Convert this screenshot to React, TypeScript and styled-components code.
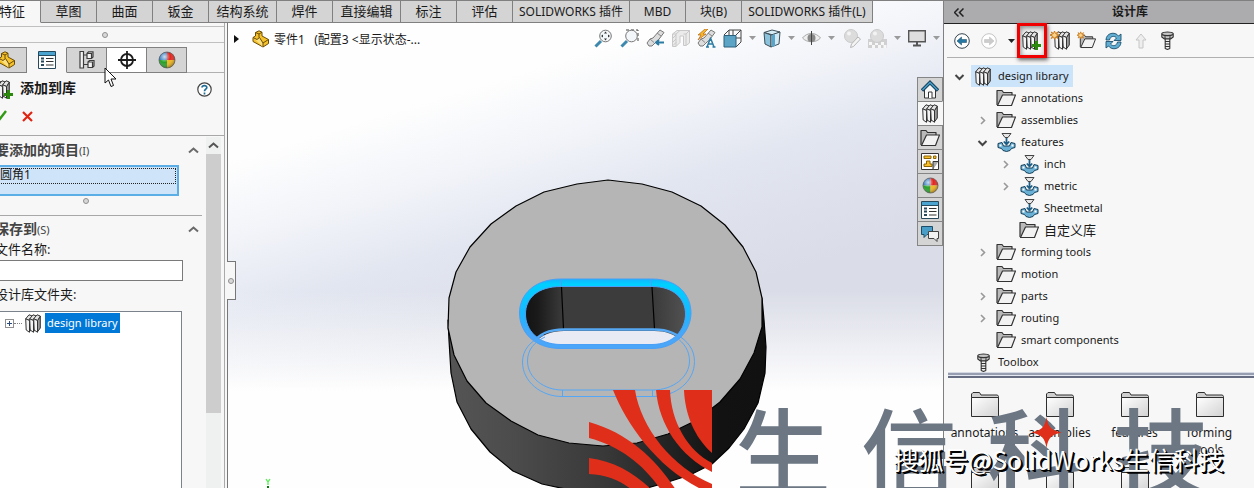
import React from 'react';
import styled, { createGlobalStyle, css } from 'styled-components';

const uiFont = '"Noto Sans", "Noto Sans CJK SC", sans-serif';

const GlobalStyle = createGlobalStyle`
  * { box-sizing: border-box; }
  body { margin: 0; font-family: ${uiFont}; font-size: 12px; color: #1a1a1a; }
  button, input { font: inherit; color: inherit; }
  button { padding: 0; border: 0; background: none; }
  ul { list-style: none; margin: 0; padding: 0; }
  h1, h2, h3, p { margin: 0; font-size: inherit; }
  svg { display: block; flex: none; }
`;

/* ---------- shell ---------- */

const Shell = styled.div`
  position: relative;
  display: flex;
  height: 100vh;
  overflow: hidden;
  background: #f7f7f7;
`;

const Main = styled.div`
  flex: 1;
  min-width: 0;
  display: flex;
  flex-direction: column;
  border-top: 1px solid #808080;
  background:
    linear-gradient(180deg, rgba(255, 255, 255, 0) 290px, #fefefe 390px),
    linear-gradient(163deg, #fefefe 220px, #f2f4f9 295px, #e2e6f0 370px, #dadce7 490px);
`;

const TabBar = styled.nav`
  display: flex;
  height: 22px;
  margin-left: -16px;
`;

const CommandTab = styled.button<{ $w: number; $active?: boolean }>`
  flex: none;
  width: ${(p) => p.$w}px;
  height: 22px;
  padding-bottom: 1px;
  font-size: 13px;
  line-height: 18px;
  white-space: nowrap;
  background: ${(p) => (p.$active ? '#f7f7f7' : '#d4d4d4')};
  border-right: 1px solid #808080;
  border-bottom: 1px solid ${(p) => (p.$active ? '#f7f7f7' : '#808080')};
`;

const LatinTabText = styled.span`
  font-size: 12px;
`;

const Work = styled.div`
  flex: 1;
  min-height: 0;
  display: flex;
`;

/* ---------- property manager ---------- */

const LeftPanel = styled.aside`
  position: relative;
  flex: none;
  width: 228px;
  padding-right: 2px;
  border-right: 1px solid #777;
  background: #f7f7f7;
`;

const LeftInner = styled.div`
  height: 100%;
  display: flex;
  flex-direction: column;
  border-right: 1px solid #aaa;
  overflow: hidden;
`;

const Grip = styled.span`
  width: 6px;
  height: 6px;
  border: 1px solid #909090;
  border-radius: 50%;
  background: #d8d8d8;
`;

const TopGrip = styled.div`
  display: flex;
  align-items: center;
  justify-content: center;
  height: 17px;
  margin-top: 3px;
  padding-right: 14px;
  border-top: 1px solid #c0c0c0;
  border-bottom: 1px solid #c0c0c0;
`;

const IconTabs = styled.div`
  display: flex;
  height: 26px;
  margin: 4px 0 0 -13px;
`;

const IconTab = styled.button<{ $kind?: 'active' | 'light' }>`
  display: flex;
  align-items: center;
  justify-content: center;
  width: 40px;
  border: 1px solid #808080;
  border-left: 0;
  background: #d4d4d4;
  ${(p) => p.$kind === 'light' && css`background: #fff;`}
  ${(p) => p.$kind === 'active' && css`background: #f7f7f7; border-top-color: #f7f7f7; border-bottom-color: #f7f7f7;`}
`;

const TabFill = styled.span`
  flex: 1;
  border-bottom: 1px solid #b0b0b0;
`;

const PanelHeader = styled.header`
  flex: none;
  height: 63px;
  padding: 6px 12px 0 0;
  border-bottom: 1px solid #a8a8a8;
`;

const TitleRow = styled.div`
  display: flex;
  align-items: center;
  gap: 6px;
  height: 20px;
  margin-left: -6px;
  font-size: 14px;
  line-height: 18px;
  font-weight: 700;
  h1 { flex: 1; padding-bottom: 2px; }
`;

const ConfirmRow = styled.div`
  display: flex;
  align-items: center;
  gap: 14px;
  height: 34px;
  margin-left: -7px;
`;

const PanelBody = styled.div`
  flex: 1;
  min-height: 0;
  display: flex;
`;

const Groups = styled.div`
  flex: 1;
  display: flex;
  flex-direction: column;
  margin-left: -5px;
  margin-right: 4px;
`;

const Group = styled.section<{ $fill?: boolean }>`
  display: flex;
  flex-direction: column;
  ${(p) => p.$fill ? css`flex: 1;` : css`padding-bottom: 9px; border-bottom: 1px solid #a8a8a8;`}
`;

const GroupHead = styled.div<{ $h: number }>`
  display: flex;
  align-items: center;
  justify-content: space-between;
  height: ${(p) => p.$h}px;
  padding-right: 3px;
  color: #444;
  h2 { font-size: 14px; line-height: 20px; white-space: nowrap; }
  small { font-size: 11px; font-weight: 400; }
`;

const Selection = styled.ul`
  height: 31px;
  margin-right: 23px;
  padding: 1px;
  border: 2px solid #5baee6;
  background: #cfe4f8;
  li { height: 16px; padding-left: 1px; border: 1px dotted #222; font-size: 12px; line-height: 12px; }
`;

const ListGrip = styled.div`
  display: flex;
  align-items: center;
  justify-content: center;
  height: 10px;
  margin-right: 26px;
`;

const FieldLabel = styled.label`
  display: block;
  height: 18px;
  font-size: 13px;
  line-height: 14px;
`;

const TextField = styled.input`
  height: 21px;
  width: auto;
  margin: 0 19px 6px 0;
  border: 1px solid #7a7a7a;
  background: #fff;
`;

const FolderBox = styled.ul`
  flex: 1;
  margin: 6px 20px 0 0;
  padding: 1px 0 0 9px;
  border: 1px solid #7c828c;
  border-bottom: 0;
  background: #fff;
  li { display: flex; align-items: center; }
`;

const Expander = styled.button`
  width: 9px;
  height: 9px;
  border: 1px solid #909090;
  background: linear-gradient(#2c4c80, #2c4c80) center / 5px 1px no-repeat, linear-gradient(#2c4c80, #2c4c80) center / 1px 5px no-repeat, #fff;
`;

const Dots = styled.span`
  width: 8px;
  margin-right: 3px;
  border-top: 1px dotted #808080;
`;

const Picked = styled.span`
  margin-left: 4px;
  padding: 0 2px;
  line-height: 20px;
  font-size: 11px;
  color: #fff;
  background: #0078d7;
`;

const ScrollTrack = styled.div`
  width: 15px;
  margin: 1px 3px 0 0;
  background: #eff0f0;
`;

const ScrollUp = styled.button`
  display: flex;
  align-items: center;
  justify-content: center;
  width: 15px;
  height: 17px;
`;

const ScrollThumb = styled.div`
  height: 259px;
  background: #cdcdcd;
`;

const Handle = styled.button`
  position: absolute;
  top: 238px;
  right: -9px;
  z-index: 2;
  display: flex;
  align-items: center;
  justify-content: center;
  width: 9px;
  height: 39px;
  border: 1px solid #777;
  border-left: 0;
  background: #f7f7f7;
`;

const Cursor = styled.svg`
  position: absolute;
  left: 104px;
  top: 44px;
  z-index: 3;
`;

/* ---------- graphics area ---------- */

const Viewport = styled.main`
  position: relative;
  flex: 1;
  min-width: 0;
  display: flex;
  align-items: flex-start;
  justify-content: space-between;
`;

const Scene = styled.svg`
  position: absolute;
  inset: 0;
`;

const FeatureCrumb = styled.div`
  position: relative;
  display: flex;
  align-items: center;
  height: 31px;
  padding-left: 6px;
  font-size: 12px;
  white-space: pre;
  svg + svg { margin: 0 4px 0 13px; }
`;

const HeadsUp = styled.div`
  position: relative;
  display: flex;
  align-items: center;
  gap: 7px;
  height: 30px;
  padding-right: 3px;
`;

const TaskRail = styled.div`
  position: absolute;
  top: 54px;
  right: 0;
  width: 26px;
`;

const RailTab = styled.button<{ $active?: boolean }>`
  display: flex;
  align-items: center;
  justify-content: center;
  width: 26px;
  height: 24px;
  border: 1px solid #858585;
  border-bottom: 0;
  background: #d4d4d4;
  &:last-child { height: 25px; border-bottom: 1px solid #858585; }
  ${(p) => p.$active && css`background: #f7f7f7; border-right-color: #f7f7f7;`}
`;

/* ---------- design library ---------- */

const RightPanel = styled.aside`
  flex: none;
  width: 311px;
  display: flex;
  flex-direction: column;
  border-top: 1px solid #808080;
  border-left: 1px solid #808080;
  background: #f7f7f7;
`;

const LibraryHead = styled.header`
  flex: none;
  display: flex;
  align-items: center;
  height: 23px;
  padding: 0 0 0 10px;
  border-bottom: 1px solid #222;
  background: #acacae;
  h2 { flex: 1; padding-left: 42px; text-align: center; font-size: 12px; line-height: 20px; }
`;

const Tools = styled.div`
  flex: none;
  display: flex;
  align-items: center;
  height: 34px;
  margin-left: 3px;
  padding-left: 4px;
  border-bottom: 1px solid #b0b0b0;
`;

const Tool = styled.button<{ $w?: number; $marked?: boolean }>`
  position: relative;
  display: flex;
  align-items: center;
  justify-content: center;
  flex: none;
  width: ${(p) => p.$w ?? 27}px;
  height: 32px;
  ${(p) => p.$marked && css`
    z-index: 1;
    height: 35px;
    border: 3px solid #f00000;
    box-shadow: 1px 2px 4px rgba(0, 0, 0, 0.6), inset 1px 2px 5px rgba(0, 0, 0, 0.45);
  `}
`;

const Tree = styled.ul`
  flex: none;
  padding: 7px 0 0 6px;
`;

const TreeRow = styled.li<{ $level: number }>`
  display: flex;
  align-items: center;
  height: 22px;
  padding-left: ${(p) => [0, 23, 46][p.$level]}px;
`;

const Twisty = styled.span`
  display: flex;
  align-items: center;
  justify-content: center;
  width: 18px;
  margin-right: 3px;
`;

const TreeItem = styled.button<{ $selected?: boolean; $cjk?: boolean }>`
  display: flex;
  align-items: center;
  gap: 5px;
  height: 22px;
  padding: 0 4px 0 2px;
  white-space: nowrap;
  font-size: ${(p) => (p.$cjk ? 13 : 11)}px;
  line-height: 20px;
  background: ${(p) => (p.$selected ? '#cce4f9' : 'transparent')};
`;

const IconCell = styled.span`
  display: flex;
  align-items: center;
  justify-content: center;
  width: 20px;
`;

const Splitter = styled.div`
  flex: none;
  height: 6px;
  margin: -1px 0 0 4px;
  border-top: 1px solid #d3d8e4;
  border-bottom: 2px solid #666d82;
  background: linear-gradient(#989eb2 2px, #e4e8f2 2px);
`;

const FolderGrid = styled.ul`
  flex: 1;
  min-height: 0;
  display: grid;
  grid-template-columns: repeat(4, 75px);
  grid-auto-rows: 75px;
  padding: 14px 0 0 3px;
`;

const FolderTile = styled.li`
  display: flex;
  flex-direction: column;
  align-items: center;
  gap: 7px;
  font-size: 12px;
  line-height: 17px;
  text-align: center;
`;

/* ---------- watermark ---------- */

const Brand = styled.div`
  position: absolute;
  right: 0;
  bottom: 0;
  z-index: 4;
  width: 665px;
  height: 98px;
  overflow: hidden;
  pointer-events: none;
`;

const BrandRow = styled.div`
  display: flex;
  align-items: flex-start;
`;

const BrandName = styled.div`
  display: flex;
  gap: 30px;
  margin: 10px 0 0 22px;
  font-family: "Noto Sans CJK SC", sans-serif;
  font-size: 96px;
  font-weight: 500;
  line-height: 96px;
  color: #6c7783;
`;

const BrandStar = styled.svg`
  position: absolute;
  left: 442px;
  top: 27px;
`;

const Credit = styled.p`
  position: absolute;
  right: 30px;
  bottom: 12px;
  font-family: "Noto Sans CJK SC", sans-serif;
  font-size: 25px;
  line-height: 34px;
  color: #fff;
  white-space: nowrap;
  text-shadow: 1px 1px 0 #000, 2px 2px 0 #000;
`;

/* ---------- icons ---------- */

const Spark = () => (
  <path d="M4 0l1 2.500L7.500 1 6 3.300 8.500 4 6 5l1.500 2.500L5 6 4 8.500 3.200 6 .8 7.500 2 5-.5 4 2 3.200.8 1 3 2.500z" fill="#fbd38a" stroke="#c87410" strokeWidth=".9" />
);

const Books = ({ plus, spark }: { plus?: boolean; spark?: boolean }) => {
  const wide = plus || spark;
  return (
    <svg width={wide ? 20 : 16} height="19" viewBox={plus ? '0 0 20 19' : spark ? '-4 0 20 19' : '0 0 16 19'} stroke="#333" strokeLinejoin="round">
      {[0, 4, 8].map((x) => (
        <g key={x} transform={`translate(${x} 0)`}>
          <path d="M4.500 6.500 7.300 2v12L4.500 17.800z" fill="#9a9a9a" />
          <path d="M.7 4.800 4 .8 7.300 2 4.500 6.500z" fill="#e4e4e4" />
          <path d="M.7 4.800 4.500 6.500v11.800L1.200 16z" fill="#f4f4f4" />
        </g>
      ))}
      {plus && <path d="M14.500 10v9M10 14.500h9" stroke="#2b8a0c" strokeWidth="3" />}
      {spark && <g transform="translate(-3.500 0)"><Spark /></g>}
    </svg>
  );
};

const OpenFolder = ({ spark }: { spark?: boolean }) => (
  <svg width={spark ? 19 : 20} height={spark ? 19 : 18} viewBox={spark ? '-3 -3 23 22' : '0 0 20 18'} stroke="#333" strokeWidth="1.200" strokeLinejoin="round">
    <path d="M1 16V1.500h5l1.500 2h8.500V6" fill="#b9b9b9" />
    <path d="M1.500 16.500 6.500 6h13l-4 10.500z" fill="#f2f2f2" />
    {spark && <g transform="translate(-2.500 -2.500)"><Spark /></g>}
  </svg>
);

const ClosedFolder = () => (
  <svg width="28" height="25" viewBox="0 0 28 25" stroke="#2e2e2e" strokeLinejoin="round">
    <defs>
      <linearGradient id="tile" x1="0" y1="0" x2="1" y2="1">
        <stop offset="0" stopColor="#fff" /><stop offset="1" stopColor="#d2d2d2" />
      </linearGradient>
    </defs>
    <path d="M.5 24V2L2 .5h6.500L10 3h16.500l1 1.500V6" fill="#cfcfcf" />
    <path d="M.5 24.500v-19h27v19z" fill="url(#tile)" />
  </svg>
);

const FeatureIcon = () => (
  <svg width="19" height="20" viewBox="0 0 19 20" strokeLinejoin="round">
    <path d="M5 1.500h9L11 5.500H8z" fill="#e6e6e6" stroke="#444" />
    <path d="M1 11.500l4-1 1.500 3.500h6l1.500-3.500 4 1v4l-3.500 1-1.500 2-3.500 1-3.500-1-1.500-2-3.500-1z" fill="#6aafd4" stroke="#143f59" />
    <path d="M2.500 13.500h2M14.500 13.500h2" stroke="#fff" strokeWidth="2" />
    <path d="M9.500 6v6M6.800 9.500l2.700 3 2.700-3" fill="none" stroke="#1f5f86" strokeWidth="1.800" />
  </svg>
);

const Bolt = () => (
  <svg width="13" height="19" viewBox="0 0 13 19" stroke="#333" strokeWidth="1.100" strokeLinejoin="round">
    <path d="M.8 2.500C2 .5 11 .5 12.200 2.500V6L9.500 8h-6L.8 6z" fill="#c6c6c6" />
    <path d="M1 3.500C3 5 10 5 12 3.500M4 5v3M9 5v3" fill="none" />
    <path d="M4.200 8h4.600v9.500l-2.300 1-2.300-1z" fill="#eee" />
    <path d="M4 10.500h5M4 13h5M4 15.500h5" />
  </svg>
);

const Ball = ({ s = 18 }: { s?: number }) => (
  <svg width={s} height={s} viewBox="0 0 18 18">
    <defs>
      <radialGradient id="gloss" cx=".35" cy=".3" r=".8">
        <stop offset="0" stopColor="#fff" stopOpacity=".75" /><stop offset=".45" stopColor="#fff" stopOpacity="0" /><stop offset="1" stopColor="#000" stopOpacity=".5" />
      </radialGradient>
    </defs>
    <path d="M9 9V1a8 8 0 0 0-8 8z" fill="#3077bd" />
    <path d="M9 9V1a8 8 0 0 1 8 8z" fill="#e2251d" />
    <path d="M9 9H1a8 8 0 0 0 8 8z" fill="#28a02b" />
    <path d="M9 9h8a8 8 0 0 1-8 8z" fill="#f3b71b" />
    <circle cx="9" cy="9" r="8" fill="url(#gloss)" stroke="#555" strokeWidth=".7" />
  </svg>
);

const PartIcon = () => (
  <svg width="18" height="18" viewBox="0 0 18 18" stroke="#6b4c06" strokeLinejoin="round">
    <path d="M1 7.500 3.500 6V2.500L7 .8l3 1.400V6l6.500 3.500v4L11 17 1 11.500z" fill="#f6c22b" />
    <path d="M1 7.500 5 9.500l2.500-2L11 13v4" fill="#fbe080" />
    <path d="M11 13l5.500-3.500M3.500 2.500 7 4l3-1.800M7 4v3.500" fill="none" />
  </svg>
);

const ListIcon = () => (
  <svg width="18" height="18" viewBox="0 0 18 18">
    <path d="M.5.500h17v17H.5z" fill="#fff" stroke="#26495c" />
    <path d="M1 1h16v3H1z" fill="#4ba3d0" />
    <path d="M.5 4.500h17" stroke="#26495c" />
    <path d="M3 7.500h3M3 10.500h3M3 14h3" stroke="#26495c" strokeWidth="2" />
    <path d="M8 7.500h7.500M8 10.500h7.500M8 14h7.500" stroke="#333" />
  </svg>
);

const ConfigIcon = () => (
  <svg width="16" height="18" viewBox="0 0 16 18" fill="#f3f3f3" stroke="#3c3c3c" strokeWidth="1.200">
    <path d="M1 .5h3.500V17H1zM4.500 4H8M4.500 13.500H9" />
    <path d="M8 2.500 9.500.8H14V6l-1.500 1.500H8zM8 2.500h4.500v5M9 11l1.500-1.500H15V15l-1.500 1.500H9zM9 11h4.500v5.500" />
  </svg>
);

const TargetIcon = () => (
  <svg width="18" height="18" viewBox="0 0 18 18" fill="none" stroke="#1c1c1c" strokeWidth="1.800">
    <circle cx="9" cy="9" r="6" /><path d="M9 0v18M0 9h18" />
  </svg>
);

const Chevron = ({ dir, color = '#6a6a6a' }: { dir: 'up' | 'down' | 'right'; color?: string }) => (
  <svg width="11" height="11" viewBox="0 0 11 11" fill="none" stroke={color} strokeWidth={dir === 'right' ? 1.6 : 2}>
    <path d={{ up: 'M1 7.500 5.500 3.500 10 7.500', down: 'M1.500 4l4 4 4-4', right: 'M4 2 7.500 5.500 4 9' }[dir]} />
  </svg>
);

const Caret = ({ color = '#9a9a9a' }: { color?: string }) => (
  <svg width="7" height="4" viewBox="0 0 7 4"><path d="M0 0h7L3.500 4z" fill={color} /></svg>
);

const ArrowCircle = ({ dim }: { dim?: boolean }) => (
  <svg width="16" height="16" viewBox="0 0 16 16">
    <circle cx="8" cy="8" r="7.300" fill="#fff" stroke={dim ? '#c4c4c4' : '#34434e'} />
    <path d={dim ? 'M13 8 8.500 4v2.500H3.500v3h5V12z' : 'M3 8l4.500-4v2.500h5v3h-5V12z'} fill={dim ? '#ccc' : '#2578a3'} stroke={dim ? '#bbb' : '#123f5c'} strokeWidth=".5" />
  </svg>
);

const RefreshIcon = () => (
  <svg width="17" height="18" viewBox="0 0 17 18" fill="#62aed3" stroke="#1c506d" strokeWidth=".9" strokeLinejoin="round">
    <path d="M1 8C1 1 10-1 13.500 4L16 2v6.500H9L11.500 6C9 3 5 4.500 4.500 8z" />
    <path d="M16 10C16 17 7 19 3.500 14L1 16V9.500h7L5.500 12c2.500 3 6.500 1.500 7-2z" />
  </svg>
);

const UpArrow = () => (
  <svg width="12" height="16" viewBox="0 0 12 16"><path d="M6 1l5 6H8v8H4V7H1z" fill="#eee" stroke="#c6c6c6" /></svg>
);

const Lens = ({ area }: { area?: boolean }) => (
  <svg width="19" height="19" viewBox="0 0 19 19" fill="none">
    {area && <path d="M6 1h12v12" stroke="#444" strokeDasharray="3 2" />}
    <path d="M1.500 17.500 7 12" stroke="#3d88ad" strokeWidth="3" />
    <circle cx="11.500" cy="7" r="5.800" fill="#f4f7f9" stroke="#777" />
    {!area && <path d="M11.500 2.500 13 4.500h-3zM11.500 11.500l-1.500-2h3zM7 7l2-1.500v3zM16 7l-2-1.500v3z" fill="#333" />}
  </svg>
);

const Scope = ({ flash }: { flash?: boolean }) => (
  <svg width="19" height="19" viewBox="0 0 19 19" strokeLinejoin="round">
    <path d="M1 14 4 10l3-1 7-8 4 2.500-6 8-2 1.500-4 4H3z" fill="#ddd" stroke="#777" />
    <path d="M4 10l4 3.500M11 4l4 3" stroke="#888" fill="none" />
    {flash
      ? <><path d="M8 0 1 6h3L1 11l8-6H6l5-5z" fill="#f5b62a" stroke="#b5641a" strokeWidth=".7" /><path d="M10 18l3.500-9L17 18M11.500 15h4M9 18h3M15.500 18h3" fill="none" stroke="#2b7ba3" strokeWidth="1.500" /></>
      : <path d="M18 13.500h-7M13 11l-3 2.500L13 16" stroke="#2b7ba3" strokeWidth="2" fill="none" />}
  </svg>
);

const SectionIcon = () => (
  <svg width="18" height="17" viewBox="0 0 18 17" fill="#ebebeb" stroke="#c8c8c8">
    <path d="M.5 4 5 .5h12.500V13L14 15.500h-2.500V6H8v6.500l-4 4H.5z" />
    <path d="M.5 4H4v12.500M4 4l4-3.500M14 4v11.500M11.500 4H14l3.500-3.500M1 8l3-3M1 12l3-3M1 15.500l3-3" fill="none" />
  </svg>
);

const ViewCube = () => (
  <svg width="19" height="19" viewBox="0 0 19 19" fill="none" stroke="#444">
    <path d="M6 1h12v12M6 1v5M18 1l-5 5M18 13l-5 5M1 6l5-5M10 6V1M13 9h5" />
    <path d="M1 6.500h12V18H1z" fill="#5ba4c6" stroke="#2d607b" />
  </svg>
);

const ShadedCube = () => (
  <svg width="18" height="19" viewBox="0 0 18 19" strokeLinejoin="round" stroke="#3f4f58">
    <path d="M1 3.500 9 1l8 2-7 3z" fill="#d8ecf5" /><path d="M1 3.500 8 6v12l-6-3z" fill="#8cc3dc" /><path d="M8 6l9-3-1 12-8 3z" fill="#d2e8f2" /><path d="M9 6l3-1v12l-3 1z" fill="#5aa5c7" stroke="none" />
  </svg>
);

const EyeIcon = () => (
  <svg width="19" height="14" viewBox="0 0 19 14">
    <path d="M.5 7C5 1 14 1 18.500 7 14 12 5 12 .5 7z" fill="#eee" stroke="#a8a8a8" /><circle cx="9.500" cy="7" r="4" fill="#888" /><path d="M9.500 0v14" stroke="#444" />
  </svg>
);

const GreyBall = ({ floor }: { floor?: boolean }) => (
  <svg width="19" height="19" viewBox="0 0 19 19">
    {floor && <><path d="M0 10h19v9H0z" fill="#d0d0d0" /><path d="M1 13h3v3H1zM7 13h3v3H7zM13 13h3v3h-3zM4 16h3v3H4zM10 16h3v3h-3zM15.500 16h3v3h-3z" fill="#f7f7f7" /></>}
    <circle cx="9" cy="7" r="6.500" fill="#dcdcdc" stroke="#cacaca" />
    <circle cx="7" cy="4.500" r="2" fill="#f3f3f3" />
    {!floor && <path d="M16 8l2.500 2-7 7.500-3 1 1-3.500z" fill="#f4f4f4" stroke="#b6b6b6" />}
  </svg>
);

const MonitorIcon = () => (
  <svg width="18" height="17" viewBox="0 0 18 17"><path d="M.7.700h16.600v11H.7z" fill="#dedede" stroke="#555" strokeWidth="1.400" /><path d="M9 12v3M5 15.500h8" stroke="#555" strokeWidth="2" /></svg>
);

const HomeIcon = () => (
  <svg width="18" height="19" viewBox="0 0 18 19">
    <path d="M3.500 9v9h11V9L9 4z" fill="#f7f7f7" stroke="#333" /><path d="M7.500 18v-6h3.500v6" fill="#fff" stroke="#333" />
    <path d="M1 10.500 9 2.500l8 8" fill="none" stroke="#15425e" strokeWidth="3.400" /><path d="M1.500 10 9 2.500l7.500 7.500" fill="none" stroke="#4aa0cb" strokeWidth="1.400" />
  </svg>
);

const PaletteIcon = () => (
  <svg width="18" height="17" viewBox="0 0 18 17" stroke="#333">
    <path d="M.5.500h17v16H.5z" fill="#fff" /><path d="M3 3h7v2.500H3zM12.500 3H15v2.500h-2.500zM5.500 8H9v3h2v2.500H3V11h2.500z" fill="#f5be2a" stroke="#8a6206" /><path d="M12 16.500v-8h5.500" fill="#aaa" />
  </svg>
);

const ChatIcon = () => (
  <svg width="18" height="16" viewBox="0 0 18 16" strokeLinejoin="round">
    <path d="M.5.500h11v8H6l-3 3v-3H.5z" fill="#4a9dc6" stroke="#1d4e69" /><path d="M7.500 5.500h10v7H16v3l-3-3H7.500z" fill="#f2f2f2" stroke="#444" />
  </svg>
);

/* ---------- content ---------- */

const tabs: { w: number; text: string; latin?: boolean }[] = [
  { w: 57, text: '特征' }, { w: 56, text: '草图' }, { w: 56, text: '曲面' }, { w: 56, text: '钣金' },
  { w: 68, text: '结构系统' }, { w: 56, text: '焊件' }, { w: 68, text: '直接编辑' }, { w: 56, text: '标注' },
  { w: 56, text: '评估' }, { w: 117, text: 'SOLIDWORKS 插件', latin: true }, { w: 56, text: 'MBD', latin: true },
  { w: 56, text: '块(B)', latin: true }, { w: 131, text: 'SOLIDWORKS 插件(L)', latin: true },
];

type Node = { level: number; text: string; icon: 'books' | 'folder' | 'feature' | 'bolt'; open?: boolean; closed?: boolean; selected?: boolean; cjk?: boolean };

const nodes: Node[] = [
  { level: 0, text: 'design library', icon: 'books', open: true, selected: true },
  { level: 1, text: 'annotations', icon: 'folder' },
  { level: 1, text: 'assemblies', icon: 'folder', closed: true },
  { level: 1, text: 'features', icon: 'feature', open: true },
  { level: 2, text: 'inch', icon: 'feature', closed: true },
  { level: 2, text: 'metric', icon: 'feature', closed: true },
  { level: 2, text: 'Sheetmetal', icon: 'feature' },
  { level: 2, text: '自定义库', icon: 'folder', cjk: true },
  { level: 1, text: 'forming tools', icon: 'folder', closed: true },
  { level: 1, text: 'motion', icon: 'folder' },
  { level: 1, text: 'parts', icon: 'folder', closed: true },
  { level: 1, text: 'routing', icon: 'folder', closed: true },
  { level: 1, text: 'smart components', icon: 'folder' },
  { level: 0, text: 'Toolbox', icon: 'bolt' },
];

const nodeIcons = { books: <Books />, folder: <OpenFolder />, feature: <FeatureIcon />, bolt: <Bolt /> };

const Part = () => (
  <Scene width="100%" height="100%" viewBox="228 23 715 465" preserveAspectRatio="xMidYMin meet" strokeLinejoin="round">
    <defs>
      <linearGradient id="side" x1="0" x2="1"><stop offset="0" stopColor="#555" /><stop offset=".2" stopColor="#4c4c4c" /><stop offset=".5" stopColor="#383838" /><stop offset=".85" stopColor="#121212" /><stop offset="1" stopColor="#111" /></linearGradient>
      <linearGradient id="wallL" x1="0" x2="1"><stop offset="0" stopColor="#101010" /><stop offset=".4" stopColor="#1a1a1a" /><stop offset="1" stopColor="#3c3c3c" /></linearGradient>
      <linearGradient id="wallR" x1="0" x2="1"><stop offset="0" stopColor="#3a3a3a" /><stop offset="1" stopColor="#565656" /></linearGradient>
      <linearGradient id="fillet" x1="0" y1="0" x2="0" y2="1"><stop offset="0" stopColor="#12b4ff" /><stop offset=".08" stopColor="#00d0ff" /><stop offset=".5" stopColor="#18b8ff" /><stop offset=".8" stopColor="#4aa6f8" /></linearGradient>
      <clipPath id="hole"><path d="M561 286H652C674 286 686 299 686 314S674 345 652 345H561C538 345 525 330 525 314S538 286 561 286z" /></clipPath>
    </defs>
    <path d="M448 320 449 340 451 373 457 402 471 429 490 452 513 471 542 484 575 491 610 493 640 490 665 483 690 475 712 464 729 448 744 429 758 403 765 373 766 347 764 320 762 298z" fill="url(#side)" stroke="#000" strokeWidth="1.2" />
    <path d="M608 180 577 184 544 192 516 206 491 224 470 247 456 272 449 298 448 328 454 355 467 381 486 403 511 421 538 435 569 443 603 446 637 443 668 434 697 420 720 402 740 379 754 353 762 327 762 298 756 272 743 247 725 225 701 206 672 192 642 184z" fill="#b5b5b5" stroke="#000" strokeWidth="1.2" />
    <g clipPath="url(#hole)">
      <path d="M520 280h42l2 70h-44z" fill="url(#wallL)" /><path d="M561 280h92l2 70h-91z" fill="#3c3c3c" /><path d="M652 280h40v70h-38z" fill="url(#wallR)" />
      <path d="M561.500 287l2 42M652 287l2.500 42" stroke="#000" strokeWidth="1.200" />
      <path d="M534 345c5-10 18-14 30-14h90c12 0 22 3 28 12v6H534z" fill="#e9ebf4" />
      <path d="M532 345c5-11 18-15.500 32-15.500h90c14 0 24 4 30 13" fill="none" stroke="#55a8f4" strokeWidth="2.600" />
    </g>
    <path fillRule="evenodd" d="M561 279H652C679 279 691 296 691 313S677 348.500 652 348.500H561C533 348.500 519.500 331 519.500 313S534 279 561 279zM561 286.500H652C674 286.500 685.500 299 685.500 314S674 344.500 652 344.500H561C538 344.500 525.500 330 525.500 314S538 286.500 561 286.500z" fill="url(#fillet)" stroke="#4a9ff6" />
    <path d="M561.500 279v7M651.500 279v7" stroke="#4a9ff6" />
    <path d="M544 335C530 341 522.500 350 522.500 362c0 20 19 34.500 39.500 34.500h91c23 0 41.500-15 41.500-35 0-12-7-21-18-27M545 337c-11 5-17.500 13-17.500 24 0 17 17 29 34.500 29h91c20 0 36.500-13 36.500-29 0-10-5-18-14-24M562.500 390v7M652.500 390v7" fill="none" stroke="#54a6f6" />
    <path d="M266 479l2 3 2-3M268 482v3" stroke="#55ee55" fill="none" strokeWidth="1.300" /><path d="M267 487h2" stroke="#087808" strokeWidth="2" />
  </Scene>
);

export default function App() {
  return (
    <Shell>
      <GlobalStyle />
      <Main>
        <TabBar>
          {tabs.map((t, i) => (
            <CommandTab key={t.text} $w={t.w} $active={i === 0}>{t.latin ? <LatinTabText>{t.text}</LatinTabText> : t.text}</CommandTab>
          ))}
        </TabBar>
        <Work>
          <LeftPanel>
            <LeftInner>
              <TopGrip><Grip /></TopGrip>
              <IconTabs>
                <IconTab aria-label="Feature tree"><PartIcon /></IconTab>
                <IconTab aria-label="Properties" $kind="active"><ListIcon /></IconTab>
                <IconTab aria-label="Configurations"><ConfigIcon /></IconTab>
                <IconTab aria-label="Dimensions" $kind="light"><TargetIcon /></IconTab>
                <IconTab aria-label="Appearance"><Ball /></IconTab>
                <TabFill />
              </IconTabs>
              <PanelHeader>
                <TitleRow>
                  <Books plus />
                  <h1>添加到库</h1>
                  <svg width="15" height="15" viewBox="0 0 15 15" fill="none"><circle cx="7.500" cy="7.500" r="6.700" fill="#fff" stroke="#444" strokeWidth="1.200" /><path d="M5 5.500C5.200 2.800 10 3 9.800 5.600 9.700 7.200 7.500 7.200 7.500 9.300M7.500 10.500v2" stroke="#1f6d96" strokeWidth="1.700" /></svg>
                </TitleRow>
                <ConfirmRow>
                  <button aria-label="OK"><svg width="15" height="12" viewBox="0 0 15 12"><path d="M2 6l4 4 7-9" stroke="#2f9a12" strokeWidth="2.400" fill="none" /></svg></button>
                  <button aria-label="Cancel"><svg width="11" height="11" viewBox="0 0 11 11"><path d="M1 1l9 9M10 1l-9 9" stroke="#e02411" strokeWidth="2.200" /></svg></button>
                </ConfirmRow>
              </PanelHeader>
              <PanelBody>
                <Groups>
                  <Group>
                    <GroupHead $h={29}><h2>要添加的项目<small>(I)</small></h2><Chevron dir="up" /></GroupHead>
                    <Selection><li>圆角1</li></Selection>
                    <ListGrip><Grip /></ListGrip>
                  </Group>
                  <Group $fill>
                    <GroupHead $h={26}><h2>保存到<small>(S)</small></h2><Chevron dir="up" /></GroupHead>
                    <FieldLabel htmlFor="file-name">文件名称:</FieldLabel>
                    <TextField id="file-name" />
                    <FieldLabel as="p">设计库文件夹:</FieldLabel>
                    <FolderBox>
                      <li><Expander aria-label="Expand" /><Dots /><Books /><Picked>design library</Picked></li>
                    </FolderBox>
                  </Group>
                </Groups>
                <ScrollTrack>
                  <ScrollUp aria-label="Scroll up"><Chevron dir="up" color="#555" /></ScrollUp>
                  <ScrollThumb />
                </ScrollTrack>
              </PanelBody>
            </LeftInner>
            <Handle aria-label="Collapse panel"><Grip /></Handle>
            <Cursor width="13" height="21" viewBox="0 0 13 21"><path d="M1 1v15l3.500-3 2.500 6.500 2.500-1L7 12h5z" fill="#fff" stroke="#111" /></Cursor>
          </LeftPanel>
          <Viewport>
            <Part />
            <FeatureCrumb>
              <svg width="5" height="8" viewBox="0 0 5 8"><path d="M0 0v8l5-4z" fill="#111" /></svg>
              <PartIcon />零件1   (配置3 &lt;显示状态-...
            </FeatureCrumb>
            <HeadsUp>
              <Lens /><Lens area /><Scope /><SectionIcon /><Scope flash />
              <ViewCube /><Caret /><ShadedCube /><Caret /><EyeIcon /><Caret />
              <GreyBall /><GreyBall floor /><Caret /><MonitorIcon /><Caret />
            </HeadsUp>
            <TaskRail>
              <RailTab aria-label="Home"><HomeIcon /></RailTab>
              <RailTab aria-label="Design library" $active><Books /></RailTab>
              <RailTab aria-label="File explorer"><OpenFolder /></RailTab>
              <RailTab aria-label="View palette"><PaletteIcon /></RailTab>
              <RailTab aria-label="Appearances"><Ball s={17} /></RailTab>
              <RailTab aria-label="Custom properties"><ListIcon /></RailTab>
              <RailTab aria-label="Forum"><ChatIcon /></RailTab>
            </TaskRail>
          </Viewport>
        </Work>
      </Main>

      <RightPanel>
        <LibraryHead>
          <button aria-label="Collapse"><svg width="10" height="9" viewBox="0 0 10 9"><path d="M4.500.5l-4 4 4 4M9.500.5l-4 4 4 4" fill="none" stroke="#222" strokeWidth="1.500" /></svg></button>
          <h2>设计库</h2>
        </LibraryHead>
        <Tools>
          <Tool $w={21} aria-label="Back"><ArrowCircle /></Tool>
          <Tool $w={33} aria-label="Forward"><ArrowCircle dim /></Tool>
          <Tool $w={12} aria-label="History"><Caret color="#222" /></Tool>
          <Tool $w={30} $marked aria-label="Add to library"><Books plus /></Tool>
          <Tool $w={26} aria-label="Add file location"><Books spark /></Tool>
          <Tool aria-label="New folder"><OpenFolder spark /></Tool>
          <Tool aria-label="Refresh"><RefreshIcon /></Tool>
          <Tool aria-label="Up one level"><UpArrow /></Tool>
          <Tool aria-label="Configure Toolbox"><Bolt /></Tool>
        </Tools>
        <Tree>
          {nodes.map((n) => (
            <TreeRow key={n.text} $level={n.level}>
              <Twisty>{n.open ? <Chevron dir="down" color="#444" /> : n.closed ? <Chevron dir="right" color="#999" /> : null}</Twisty>
              <TreeItem $selected={n.selected} $cjk={n.cjk}>
                <IconCell>{nodeIcons[n.icon]}</IconCell>{n.text}
              </TreeItem>
            </TreeRow>
          ))}
        </Tree>
        <Splitter />
        <FolderGrid>
          {['annotations', 'assemblies', 'features', 'forming tools', '', '', ''].map((name, i) => (
            <FolderTile key={i}><ClosedFolder />{name}</FolderTile>
          ))}
        </FolderGrid>
      </RightPanel>

      <Brand>
        <BrandRow>
          <svg width="124" height="99" viewBox="589 390 124 99" fill="#df2e19">
            <path d="M613 390h22C641 428 672 467 712 484v10C662 474 628 428 613 390z" />
            <path d="M656 390h14C671 422 688 451 712 463v9C680 456 659 425 656 390z" />
            <path d="M684 390h28v63C694 437 685 414 684 390z" />
            <path d="M589 422C628 433 656 459 676 490H661C644 465 620 446 589 438z" />
            <path d="M589 458C614 461 634 473 652 490H632C620 480 606 475 589 474z" />
          </svg>
          <BrandName><span>生</span><span>信</span><span>科</span><span>技</span></BrandName>
        </BrandRow>
        <BrandStar width="31" height="31" viewBox="0 0 31 31"><path d="M15.500 0C17 10 21 14 31 15.500 21 17 17 21 15.500 31 14 21 10 17 0 15.500 10 14 14 10 15.500 0z" fill="#df2e19" /></BrandStar>
        <Credit>搜狐号@SolidWorks生信科技</Credit>
      </Brand>
    </Shell>
  );
}
